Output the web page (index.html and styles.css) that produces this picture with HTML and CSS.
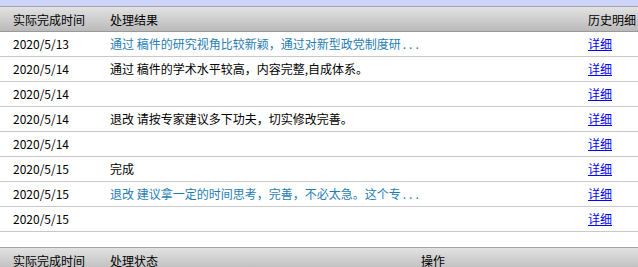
FILE: index.html
```html
<!DOCTYPE html>
<html lang="zh-CN">
<head>
<meta charset="utf-8">
<link rel="stylesheet" href="styles.css">
</head>
<body>
<div class="band"></div>
<div class="grid head">
  <div class="cell">实际完成时间</div>
  <div class="cell">处理结果</div>
  <div class="cell">历史明细</div>
</div>
<div class="grid row">
  <div class="cell">2020/5/13</div>
  <div class="cell teal">通过&nbsp;稿件的研究视角比较新颖，通过对新型政党制度研<span class="dots">...</span></div>
  <div class="cell"><a href="#">详细</a></div>
</div>
<div class="grid row">
  <div class="cell">2020/5/14</div>
  <div class="cell">通过&nbsp;稿件的学术水平较高，内容完整,自成体系。</div>
  <div class="cell"><a href="#">详细</a></div>
</div>
<div class="grid row">
  <div class="cell">2020/5/14</div>
  <div class="cell"></div>
  <div class="cell"><a href="#">详细</a></div>
</div>
<div class="grid row">
  <div class="cell">2020/5/14</div>
  <div class="cell">退改&nbsp;请按专家建议多下功夫，切实修改完善。</div>
  <div class="cell"><a href="#">详细</a></div>
</div>
<div class="grid row">
  <div class="cell">2020/5/14</div>
  <div class="cell"></div>
  <div class="cell"><a href="#">详细</a></div>
</div>
<div class="grid row">
  <div class="cell">2020/5/15</div>
  <div class="cell">完成</div>
  <div class="cell"><a href="#">详细</a></div>
</div>
<div class="grid row">
  <div class="cell">2020/5/15</div>
  <div class="cell teal">退改&nbsp;建议拿一定的时间思考，完善，不必太急。这个专<span class="dots">...</span></div>
  <div class="cell"><a href="#">详细</a></div>
</div>
<div class="grid row">
  <div class="cell">2020/5/15</div>
  <div class="cell"></div>
  <div class="cell"><a href="#">详细</a></div>
</div>
<div class="spacer"></div>
<div class="grid head head2">
  <div class="cell">实际完成时间</div>
  <div class="cell">处理状态</div>
  <div class="cell">操作</div>
</div>
</body>
</html>
```
FILE: styles.css
```css
html, body {
  margin: 0;
  padding: 0;
  background: #ffffff;
}
body {
  width: 638px;
  font-family: "Noto Sans CJK SC", "DejaVu Sans", sans-serif;
  font-size: 12px;
  color: #000000;
  overflow: hidden;
}
.band {
  height: 6px;
  background: #ccd4fa;
}
.grid {
  display: grid;
  grid-template-columns: 97px 478px 1fr;
}
.cell {
  padding-left: 13px;
  white-space: nowrap;
  overflow: hidden;
}
.head {
  height: 23px;
  border-top: 1px solid #a3a3a3;
  border-bottom: 1px solid #999999;
  background: linear-gradient(#e2e2e2, #bababa);
  align-items: center;
  padding-top: 1px;
  box-sizing: content-box;
}
.head .cell {
  line-height: 22px;
}
.row {
  height: 24px;
  border-bottom: 1px solid #c9c9c9;
  align-items: center;
  line-height: 24px;
}
.teal {
  color: #1f7db4;
}
.dots {
  letter-spacing: 3px;
  padding-left: 2px;
}
a {
  color: #0000ff;
  text-decoration: underline;
}
.spacer {
  height: 15px;
}
.head2 {
  grid-template-columns: 97px 311px 1fr;
  border-bottom: none;
}
```
